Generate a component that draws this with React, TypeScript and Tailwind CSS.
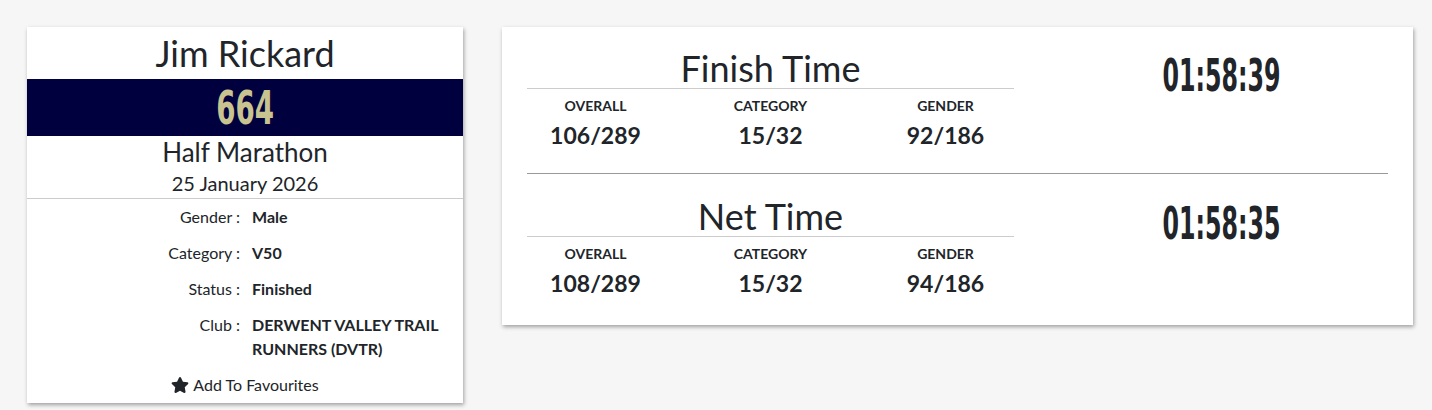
import React from 'react';
import { FaStar } from 'react-icons/fa';

type Rank = { label: string; value: string };

const SECTIONS: { title: string; time: string; ranks: Rank[] }[] = [
  {
    title: 'Finish Time',
    time: '01:58:39',
    ranks: [
      { label: 'OVERALL', value: '106/289' },
      { label: 'CATEGORY', value: '15/32' },
      { label: 'GENDER', value: '92/186' },
    ],
  },
  {
    title: 'Net Time',
    time: '01:58:35',
    ranks: [
      { label: 'OVERALL', value: '108/289' },
      { label: 'CATEGORY', value: '15/32' },
      { label: 'GENDER', value: '94/186' },
    ],
  },
];

const DETAILS = [
  { label: 'Gender :', value: 'Male' },
  { label: 'Category :', value: 'V50' },
  { label: 'Status :', value: 'Finished' },
  { label: 'Club :', value: 'DERWENT VALLEY TRAIL RUNNERS (DVTR)' },
];

const narrow = "font-['Liberation_Sans_Narrow','DejaVu_Sans_Condensed',sans-serif] font-bold";

const App: React.FC = () => {
  return (
    <div className="min-h-screen bg-[#f6f6f6] font-['Lato','Noto_Sans',sans-serif] text-[#212529]">
      <div className="flex items-start gap-[39px] pl-[27px] pt-[27px]">
        {/* Runner card */}
        <div className="w-[436px] bg-white shadow-[1px_2px_4px_rgba(0,0,0,0.35)]">
          <h2 className="h-[52px] text-center text-[36px] leading-[52px]">Jim Rickard</h2>
          <div className="flex h-[57px] items-center justify-center bg-[#00003f]">
            <span className={`${narrow} inline-block scale-x-[0.67] text-[46px] leading-none text-[#c8c38f]`}>664</span>
          </div>
          <div className="h-[32px] text-center text-[26px] leading-[32px]">Half Marathon</div>
          <div className="h-[31px] border-b border-[#cccccc] text-center text-[20px] leading-[30px]">25 January 2026</div>
          <div className="text-[16px] leading-[24px]">
            {DETAILS.map((d) => (
              <div key={d.label} className="grid grid-cols-2 py-[6px]">
                <div className="pr-[5px] text-right">{d.label}</div>
                <div className="pl-[7px] pr-[10px] font-bold">{d.value}</div>
              </div>
            ))}
          </div>
          <div className="flex items-center justify-center gap-[4px] pb-[6px] pt-[6px] text-[16px] leading-[24px]">
            <FaStar className="h-[18px] w-[18px] text-[#212529]" />
            <span>Add To Favourites</span>
          </div>
        </div>

        {/* Times card */}
        <div className="w-[911px] bg-white pb-[26px] shadow-[1px_2px_4px_rgba(0,0,0,0.35)]">
          {SECTIONS.map((s, i) => (
            <div key={s.title}>
              {i > 0 && <div className="mx-[25px] mt-[22px] border-t border-[#999999]" />}
              <div className="flex pl-[6px] pr-[4px]">
                <div className="w-[525px]">
                  <h3
                    className={`mx-[19px] h-[41px] border-b border-[#cccccc] text-center text-[36px] leading-[40px] ${
                      i === 0 ? 'mt-[21px]' : 'mt-[22px]'
                    }`}
                  >
                    {s.title}
                  </h3>
                  <div className="grid grid-cols-3 pt-[7px]">
                    {s.ranks.map((r) => (
                      <div key={r.label} className="text-center">
                        <div className="text-[14px] font-bold leading-[20px]">{r.label}</div>
                        <div className="mt-[3px] text-[23px] font-bold leading-[32px]">{r.value}</div>
                      </div>
                    ))}
                  </div>
                </div>
                <div className="flex flex-1 justify-center">
                  <span
                    className={`${narrow} inline-block scale-x-[0.6] text-[44px] leading-none ${
                      i === 0 ? 'mt-[27px]' : 'mt-[28px]'
                    }`}
                  >
                    {s.time}
                  </span>
                </div>
              </div>
            </div>
          ))}
        </div>
      </div>
    </div>
  );
};

export default App;
